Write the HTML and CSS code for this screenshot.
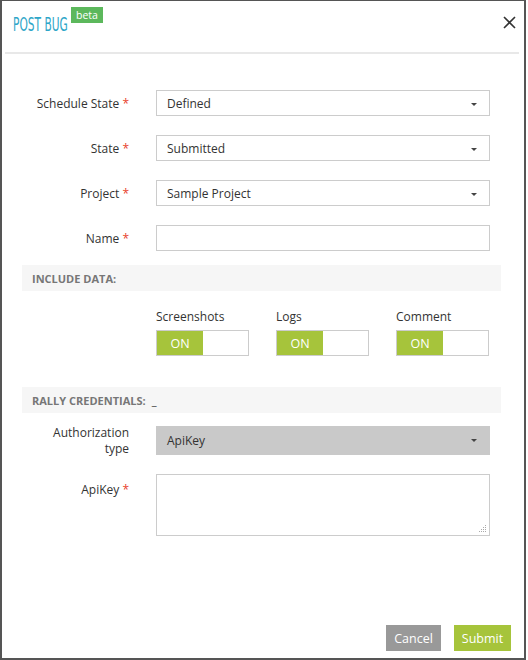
FILE: index.html
```html
<!DOCTYPE html>
<html>
<head>
<meta charset="utf-8">
<link rel="stylesheet" href="styles.css">
</head>
<body>
<div class="dialog">
  <div class="header">
    <div class="title"><span class="title-text">POST BUG</span></div>
    <span class="beta">beta</span>
    <svg class="close" width="13" height="13" viewBox="0 0 13 13"><path d="M1 1L12 12M12 1L1 12" stroke="#333" stroke-width="1.6"/></svg>
  </div>
  <div class="form">
    <div class="row">
      <div class="label">Schedule State <span class="req">*</span></div>
      <div class="select">Defined<span class="caret"></span></div>
    </div>
    <div class="row">
      <div class="label">State <span class="req">*</span></div>
      <div class="select">Submitted<span class="caret"></span></div>
    </div>
    <div class="row">
      <div class="label">Project <span class="req">*</span></div>
      <div class="select">Sample Project<span class="caret"></span></div>
    </div>
    <div class="row">
      <div class="label">Name <span class="req">*</span></div>
      <div class="input"></div>
    </div>
  </div>
  <div class="band">INCLUDE DATA:</div>
  <div class="toggles">
    <div class="toggle-item">
      <div class="toggle-label">Screenshots</div>
      <div class="toggle"><span class="on">ON</span></div>
    </div>
    <div class="toggle-item">
      <div class="toggle-label">Logs</div>
      <div class="toggle"><span class="on">ON</span></div>
    </div>
    <div class="toggle-item">
      <div class="toggle-label">Comment</div>
      <div class="toggle"><span class="on">ON</span></div>
    </div>
  </div>
  <div class="band band2">RALLY CREDENTIALS: <span class="dash">_</span></div>
  <div class="form form2">
    <div class="row row-auth">
      <div class="label two"><span class="line">Authorization</span><span class="line">type</span></div>
      <div class="select gray">ApiKey<span class="caret"></span></div>
    </div>
    <div class="row row-ta">
      <div class="label ta-label">ApiKey <span class="req">*</span></div>
      <div class="textarea"><svg class="grip" width="8" height="8" viewBox="0 0 8 8"><g fill="#aaa"><rect x="6" y="0" width="1" height="1"/><rect x="4" y="2" width="1" height="1"/><rect x="6" y="2" width="1" height="1"/><rect x="2" y="4" width="1" height="1"/><rect x="4" y="4" width="1" height="1"/><rect x="6" y="4" width="1" height="1"/><rect x="0" y="6" width="1" height="1"/><rect x="2" y="6" width="1" height="1"/><rect x="4" y="6" width="1" height="1"/><rect x="6" y="6" width="1" height="1"/></g></svg></div>
    </div>
  </div>
  <div class="spacer"></div>
  <div class="footer">
    <div class="btn cancel">Cancel</div>
    <div class="btn submit">Submit</div>
  </div>
</div>
</body>
</html>
```
FILE: styles.css
```css
* { box-sizing: border-box; }
html, body { margin: 0; padding: 0; background: #fff; }
body { font-family: "Open Sans", "Liberation Sans", sans-serif; font-size: 12px; color: #333; }
.dialog {
  width: 526px; height: 660px;
  border: 1px solid #555; border-left-width: 2px; border-right-width: 2px; border-bottom-width: 2px;
  display: flex; flex-direction: column;
}
.header {
  height: 53px; margin: 0 5px 0 3px; border-bottom: 2px solid #e8e8e8;
  position: relative; display: flex; align-items: flex-start;
}
.title { width: 54px; margin: 12px 0 0 8px; overflow: visible; white-space: nowrap; }
.title-text {
  display: inline-block; transform: scaleX(0.56); transform-origin: left center;
  font-family: "DejaVu Sans", sans-serif; color: #2ea6c8; font-size: 19px;
}
.beta {
  background: #5cb85c; color: #fff; font-size: 10.5px; line-height: 16px;
  padding: 0 5px; margin: 6px 0 0 4px; height: 16px;
}
.close { position: absolute; right: 3px; top: 15px; }
.form { padding: 36px 0 0 0; display: flex; flex-direction: column; gap: 19px; }
.row { display: flex; align-items: center; gap: 27px; }
.label { width: 127px; text-align: right; }
.req { color: #e8412c; }
.select, .input {
  width: 334px; height: 26px; border: 1px solid #ccc; background: #fff;
  padding: 0 10px; display: flex; align-items: center; position: relative; color: #333;
}
.caret {
  position: absolute; right: 12px; top: 12px;
  border-left: 3px solid transparent; border-right: 3px solid transparent; border-top: 3px solid #444;
}
.band {
  margin: 14px 23px 0 20px; height: 26px; background: #f6f6f6;
  font-size: 11px; font-weight: bold; color: #777; padding-left: 10px;
  display: flex; align-items: center;
}
.toggles { display: flex; gap: 27px; padding-left: 154px; margin-top: 17px; }
.toggle-item { width: 93px; }
.toggle-label { height: 22px; }
.toggle { width: 93px; height: 26px; border: 1px solid #ccc; display: flex; }
.on {
  width: 46px; background: #a6c43b; color: #fff; display: flex; align-items: center;
  justify-content: center; font-size: 12.5px;
}
.band2 { margin-top: 31px; }
.dash { margin-left: 6px; font-weight: normal; color: #333; }
.form2 { padding-top: 13px; }
.row-auth { height: 29px; }
.two { display: flex; flex-direction: column; align-items: flex-end; }
.two .line { display: block; line-height: 16px; }
.select.gray { background: #c9c9c9; border-color: #c9c9c9; height: 29px; }
.row-ta { align-items: flex-start; }
.ta-label { padding-top: 7px; }
.textarea { width: 334px; height: 62px; border: 1px solid #ccc; position: relative; }
.grip { position: absolute; right: 2px; bottom: 2px; }
.spacer { flex: 1; }
.footer { display: flex; justify-content: flex-end; gap: 13px; padding: 0 13px 7px 0; }
.btn { height: 26px; display: flex; align-items: center; justify-content: center; color: #fff; font-size: 12.5px; }
.cancel { width: 55px; background: #999; }
.submit { width: 57px; background: #a6c43b; }
```
